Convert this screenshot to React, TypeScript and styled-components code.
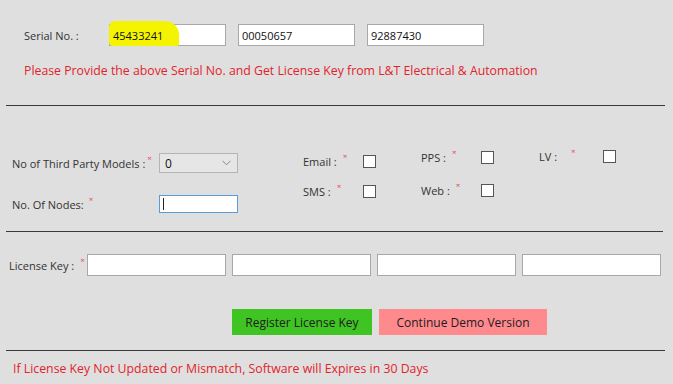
import React from 'react';
import styled, { createGlobalStyle } from 'styled-components';

const GlobalStyle = createGlobalStyle`
  html, body {
    margin: 0;
    padding: 0;
    background: #dfdfdf;
  }
`;

const Page = styled.div`
  width: 673px;
  height: 384px;
  overflow: hidden;
  background: #dfdfdf;
  font-family: 'Open Sans', 'Noto Sans', sans-serif;
  font-size: 11px;
  color: #333;
  box-sizing: border-box;
`;

const SerialSection = styled.section`
  padding: 24px 0 0 24px;
  height: 105px;
  box-sizing: border-box;
`;

const SerialRow = styled.div`
  display: flex;
  align-items: center;
  gap: 12px;
`;

const SerialLabel = styled.span`
  width: 73px;
`;

const TextBox = styled.div<{ $w: number; $h?: number; $focus?: boolean }>`
  width: ${(p) => p.$w}px;
  height: ${(p) => p.$h ?? 22}px;
  box-sizing: border-box;
  background: #fff;
  border: 1px solid ${(p) => (p.$focus ? '#5b9bd5' : '#a8a8a8')};
  display: flex;
  align-items: center;
  padding-left: 3px;
  color: #111;
`;

const Highlight = styled.span`
  background: #f4f400;
  margin: -7px 0 -3px -4px;
  padding: 7px 16px 3px 4px;
  border-radius: 6px 14px 2px 4px;
`;

const Caret = styled.span`
  width: 1px;
  height: 12px;
  background: #222;
`;

const Note = styled.p`
  margin: 16px 0 0;
  color: #e2232b;
  font-size: 12.3px;
`;

const Divider = styled.hr<{ $right?: number }>`
  margin: 0 ${(p) => p.$right ?? 8}px 0 6px;
  border: none;
  border-top: 1px solid #3a3a3a;
`;

const OptionsSection = styled.section`
  height: 125px;
  box-sizing: border-box;
  display: flex;
  padding: 42px 0 0 12px;
`;

const LeftForm = styled.div`
  display: grid;
  grid-template-columns: 147px 79px;
  grid-template-rows: 20px 18px;
  row-gap: 22px;
  align-items: center;
  padding-top: 5px;
`;

const FieldLabel = styled.span<{ $gap?: number }>`
  display: flex;
  align-items: flex-start;
  gap: ${(p) => p.$gap ?? 6}px;
`;

const Req = styled.span`
  color: #e0434b;
  font-size: 8px;
  line-height: 1;
  margin-top: -2px;
`;

const Select = styled.div`
  width: 79px;
  height: 20px;
  box-sizing: border-box;
  background: #e6e6e6;
  border: 1px solid #b4b4b4;
  display: flex;
  align-items: center;
  justify-content: space-between;
  padding: 0 6px 0 5px;
  font-size: 12px;
  color: #111;
`;

const CheckArea = styled.div`
  display: flex;
  margin-left: 65px;
`;

const CheckColumn = styled.div<{ $shift: number; $gap: number }>`
  width: 118px;
  display: flex;
  flex-direction: column;
  gap: ${(p) => p.$gap}px;
  margin-top: ${(p) => p.$shift}px;
`;

const CheckItem = styled.label<{ $labelW: number }>`
  display: grid;
  grid-template-columns: ${(p) => p.$labelW}px 13px;
  align-items: center;
  height: 13px;
`;

const CheckBox = styled.span`
  width: 13px;
  height: 13px;
  box-sizing: border-box;
  background: #fff;
  border: 1px solid #555;
`;

const LicenseSection = styled.section`
  height: 118px;
  box-sizing: border-box;
  padding: 22px 0 0 9px;
`;

const LicenseRow = styled.div`
  display: flex;
  align-items: center;
`;

const LicenseLabel = styled(FieldLabel)`
  width: 78px;
`;

const KeyInputs = styled.div`
  display: flex;
  gap: 6px;
`;

const ButtonRow = styled.div`
  display: flex;
  gap: 7px;
  margin: 33px 0 0 223px;
`;

const ActionButton = styled.button<{ $bg: string; $w: number }>`
  width: ${(p) => p.$w}px;
  height: 26px;
  border: none;
  background: ${(p) => p.$bg};
  font-family: inherit;
  font-size: 12px;
  color: #1c1c1c;
  padding: 0;
  cursor: pointer;
`;

const Footer = styled.p`
  margin: 9px 0 0 13px;
  color: #e2232b;
  font-size: 12.3px;
`;

const Chevron = () => (
  <svg width="9" height="6" viewBox="0 0 9 6">
    <path d="M0.5 0.8 L4.5 4.8 L8.5 0.8" fill="none" stroke="#888" strokeWidth="1" />
  </svg>
);

function App() {
  return (
    <Page>
      <GlobalStyle />
      <SerialSection>
        <SerialRow>
          <SerialLabel>Serial No. :</SerialLabel>
          <TextBox $w={117}>
            <Highlight>45433241</Highlight>
          </TextBox>
          <TextBox $w={117}>00050657</TextBox>
          <TextBox $w={117}>92887430</TextBox>
        </SerialRow>
        <Note>Please Provide the above Serial No. and Get License Key from L&amp;T Electrical &amp; Automation</Note>
      </SerialSection>
      <Divider />

      <OptionsSection>
        <LeftForm>
          <FieldLabel $gap={2}>
            No of Third Party Models : <Req>×</Req>
          </FieldLabel>
          <Select>
            <span>0</span>
            <Chevron />
          </Select>
          <FieldLabel $gap={5}>
            No. Of Nodes: <Req>×</Req>
          </FieldLabel>
          <TextBox $w={79} $h={18} $focus>
            <Caret />
          </TextBox>
        </LeftForm>
        <CheckArea>
          <CheckColumn $shift={6} $gap={17}>
            <CheckItem $labelW={60}>
              <FieldLabel>
                Email : <Req>×</Req>
              </FieldLabel>
              <CheckBox />
            </CheckItem>
            <CheckItem $labelW={60}>
              <FieldLabel>
                SMS : <Req>×</Req>
              </FieldLabel>
              <CheckBox />
            </CheckItem>
          </CheckColumn>
          <CheckColumn $shift={2} $gap={20}>
            <CheckItem $labelW={60}>
              <FieldLabel>
                PPS : <Req>×</Req>
              </FieldLabel>
              <CheckBox />
            </CheckItem>
            <CheckItem $labelW={60}>
              <FieldLabel>
                Web : <Req>×</Req>
              </FieldLabel>
              <CheckBox />
            </CheckItem>
          </CheckColumn>
          <CheckColumn $shift={1} $gap={20}>
            <CheckItem $labelW={64}>
              <FieldLabel $gap={14}>
                LV : <Req>×</Req>
              </FieldLabel>
              <CheckBox />
            </CheckItem>
          </CheckColumn>
        </CheckArea>
      </OptionsSection>
      <Divider $right={10} />

      <LicenseSection>
        <LicenseRow>
          <LicenseLabel>
            License Key : <Req>×</Req>
          </LicenseLabel>
          <KeyInputs>
            <TextBox $w={139} />
            <TextBox $w={139} />
            <TextBox $w={139} />
            <TextBox $w={139} />
          </KeyInputs>
        </LicenseRow>
        <ButtonRow>
          <ActionButton $bg="#40c423" $w={140}>Register License Key</ActionButton>
          <ActionButton $bg="#ff8a8e" $w={168}>Continue Demo Version</ActionButton>
        </ButtonRow>
      </LicenseSection>
      <Divider />

      <Footer>If License Key Not Updated or Mismatch, Software will Expires in 30 Days</Footer>
    </Page>
  );
}

export default App;
